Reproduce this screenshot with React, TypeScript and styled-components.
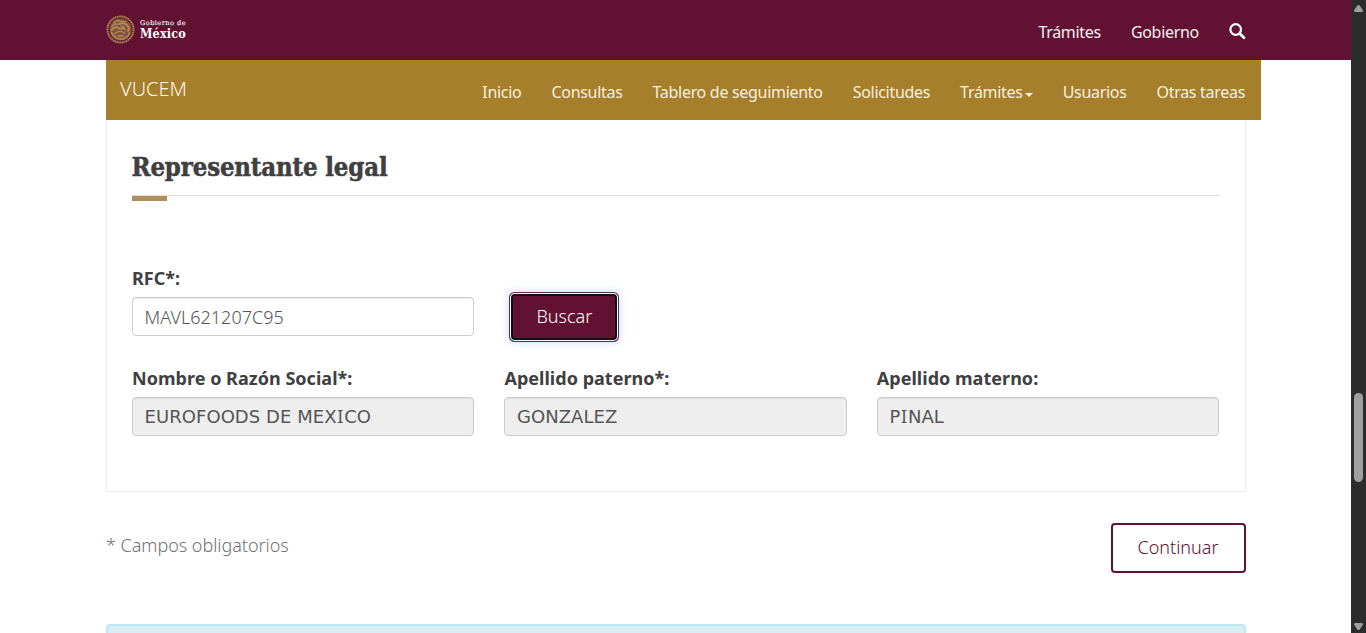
import React from 'react';
import styled, { createGlobalStyle } from 'styled-components';

const GlobalStyle = createGlobalStyle`
  *, *::before, *::after { box-sizing: border-box; }
  body { margin: 0; background: #fff; overflow: hidden; }
  #root { height: 633px; }
`;

const Screen = styled.div`
  display: flex;
  width: 1366px;
  height: 633px;
  overflow: hidden;
  font-family: 'Noto Sans', sans-serif;
  font-size: 18px;
  font-weight: 300;
  color: #404041;
`;

const Viewport = styled.div`
  flex: 1;
  min-width: 0;
  overflow: hidden;
`;

const Header = styled.header`
  display: flex;
  justify-content: space-between;
  height: 60px;
  padding: 0 105px 0 106px;
  background: #611232;
  color: #fff;
`;

const Brand = styled.div`
  display: flex;
  align-items: flex-start;
  gap: 5px;
  padding-top: 15px;
`;

const BrandText = styled.div`
  display: flex;
  flex-direction: column;
  padding-top: 4px;
  font-family: 'DejaVu Serif', serif;
  font-weight: 700;
`;

const BrandSmall = styled.span`
  font-size: 6.6px;
  line-height: 9px;
  font-weight: 400;
  letter-spacing: 0.45px;
  -webkit-text-stroke: 0.1px currentColor;
`;

const BrandLarge = styled.span`
  font-family: 'DejaVu Serif Condensed', 'DejaVu Serif', serif;
  font-size: 12.5px;
  line-height: 11px;
  letter-spacing: 0.15px;
`;

const Links = styled.nav<{ $tone: string }>`
  display: flex;
  align-items: flex-start;
  gap: 30px;
  padding-top: 20px;
  font-size: 16px;
  line-height: 24px;
  font-weight: 400;
  letter-spacing: -0.3px;
  color: ${p => p.$tone};
  white-space: nowrap;
`;

const NavLink = styled.span`
  display: flex;
  align-items: center;
`;

const Caret = styled.i`
  margin: 5px 0 0 2px;
  border: 4px solid transparent;
  border-top-color: currentColor;
  border-bottom: 0;
`;

const SubNav = styled.div`
  display: flex;
  justify-content: space-between;
  width: 1155px;
  height: 60px;
  margin-left: 106px;
  padding: 0 16px 0 14px;
  background: #a57f2c;
`;

const SubBrand = styled.span`
  padding-top: 14px;
  font-size: 20px;
  line-height: 30px;
  color: #fbf5ec;
`;

const Main = styled.main`
  width: 1140px;
  margin-left: 106px;
`;

const Panel = styled.section`
  height: 372px;
  padding: 27px 25px 0;
  border: 1px solid #eee;
  border-top: 0;
`;

const Title = styled.h3`
  height: 49px;
  margin: 0;
  border-bottom: 1px solid #ddd;
  font-family: 'DejaVu Serif Condensed', 'DejaVu Serif', serif;
  font-size: 25.5px;
  line-height: 41px;
  font-weight: 700;
  letter-spacing: -0.15px;
  text-indent: -0.5px;
  -webkit-text-stroke: 0.5px currentColor;
  white-space: nowrap;
`;

const Accent = styled.div`
  width: 35px;
  height: 5px;
  background: #b38e5d;
`;

const Row = styled.div<{ $top: number }>`
  display: grid;
  grid-template-columns: repeat(3, 342.4px);
  column-gap: 30px;
  margin-top: ${p => p.$top}px;
`;

const Field = styled.div`
  display: flex;
  flex-direction: column;
`;

const Label = styled.label`
  height: 31px;
  line-height: 25px;
  font-weight: 700;
  letter-spacing: 0.03px;
  white-space: nowrap;
`;

const Control = styled.div<{ $disabled?: boolean }>`
  height: 39px;
  padding: 0 12px;
  border: 1px solid #ccc;
  border-radius: 4px;
  box-shadow: inset 0 1px 1px rgba(0, 0, 0, 0.075);
  background: ${p => (p.$disabled ? '#eee' : '#fff')};
  color: #555;
  line-height: ${p => (p.$disabled ? 37 : 39)}px;
  font-family: ${p => (p.$disabled ? "'DejaVu Sans', sans-serif" : 'inherit')};
  font-weight: ${p => (p.$disabled ? 400 : 300)};
  text-indent: -0.4px;
  letter-spacing: ${p => (p.$disabled ? 0.05 : 0)}px;
  white-space: nowrap;
`;

const SlabI = styled.span`
  font-family: 'Noto Sans', sans-serif;
  letter-spacing: 0.8px;
  margin-left: 0.7px;
`;

const Button = styled.button<{ $primary?: boolean }>`
  height: ${p => (p.$primary ? 42 : 50)}px;
  width: ${p => (p.$primary ? 102 : 135)}px;
  padding: ${p => (p.$primary ? '0 0 2px' : '0 1px 2px 0')};
  border: ${p => (p.$primary ? '0' : '2px solid #611232')};
  border-radius: ${p => (p.$primary ? 2 : 4)}px;
  background: ${p => (p.$primary ? '#611232' : '#fff')};
  color: ${p => (p.$primary ? '#fff' : '#611232')};
  margin: ${p => (p.$primary ? '30px 0 0 9px' : '0')};
  box-shadow: ${p =>
    p.$primary
      ? '0 0 0 2px #101010, 0 0 0 3px #fff, 0 0 0 4px #612a5a, 0 0 9px 4px rgba(102, 175, 233, 0.45)'
      : 'none'};
  font: inherit;
`;

const Footer = styled.div`
  display: flex;
  justify-content: space-between;
  margin-top: 31px;
`;

const Note = styled.span`
  padding-top: 10px;
  line-height: 25px;
  letter-spacing: -0.03px;
  color: #727272;
`;

const Alert = styled.div`
  height: 60px;
  margin-top: 51px;
  border: 2px solid #bce8f1;
  border-radius: 4px;
  background: #d9edf7;
`;

const Scrollbar = styled.div`
  display: flex;
  flex-direction: column;
  align-items: center;
  width: 15px;
  background: #2c2c2c;
`;

const Thumb = styled.div`
  width: 9px;
  height: 89px;
  margin: 381px 0 139px;
  border-radius: 5px;
  background: #9f9f9f;
`;

const ArrowIcon = ({ down }: { down?: boolean }) => (
  <svg width="15" height="12" viewBox="0 0 15 12">
    <path
      d={down ? 'M3 3.6Q3 2 4.2 2H10.8Q12 2 12 3.6L8.7 8.4Q7.5 9.6 6.3 8.4Z' : 'M3 10.4Q3 12 4.2 12H10.8Q12 12 12 10.4L8.7 5.6Q7.5 4.4 6.3 5.6Z'}
      fill="#9f9f9f"
    />
  </svg>
);

const Seal = () => (
  <svg width="29" height="29" viewBox="0 0 29 29" fill="none">
    <circle cx="14.5" cy="14.5" r="11" fill="#84513f" />
    <circle cx="14.5" cy="14.5" r="13" stroke="#a57f4c" strokeWidth="2" strokeDasharray="1.8 .4" />
    <circle cx="14.5" cy="14.5" r="11.6" stroke="#6d2a38" strokeWidth=".7" />
    <g stroke="#b08a52" strokeLinecap="round">
      <path d="M8 8Q11 4.5 14 6T19.5 6.5M6 11.5Q9 8 11.5 9.5" strokeWidth="1.5" />
      <path d="M13 9Q18 7 21 10T22 16M5.5 15Q9 11 12.5 13T18 12" strokeWidth="1.9" />
      <path d="M5.5 17.5Q8 23.5 14.5 24T23.5 18" strokeWidth="1.7" />
      <path d="M9 18.5Q13 14.5 18.5 18M12 21H17.5M15 11L19.5 15" strokeWidth="1.4" />
    </g>
  </svg>
);

const SearchIcon = () => (
  <svg width="17" height="17" viewBox="0 0 17 17" fill="none" stroke="#fff">
    <circle cx="6.7" cy="6.5" r="5.3" strokeWidth="2.2" />
    <path d="M10.7 10.5L15 14.8" strokeWidth="2.8" strokeLinecap="round" />
  </svg>
);

const SearchBox = styled.span`
  display: flex;
  padding-top: 3px;
`;

const Value = ({ text }: { text: string }) => (
  <>
    {text.split(/(I)/).map((part, i) => (part === 'I' ? <SlabI key={i}>I</SlabI> : part))}
  </>
);

const menu = ['Inicio', 'Consultas', 'Tablero de seguimiento', 'Solicitudes', 'Trámites', 'Usuarios', 'Otras tareas'];

const people = [
  ['Nombre o Razón Social*:', 'EUROFOODS DE MEXICO'],
  ['Apellido paterno*:', 'GONZALEZ'],
  ['Apellido materno:', 'PINAL'],
];

export default function App() {
  return (
    <Screen>
      <GlobalStyle />
      <Viewport>
        <Header>
          <Brand>
            <Seal />
            <BrandText>
              <BrandSmall>Gobierno de</BrandSmall>
              <BrandLarge>México</BrandLarge>
            </BrandText>
          </Brand>
          <Links $tone="#f6eef1">
            <NavLink>Trámites</NavLink>
            <NavLink>Gobierno</NavLink>
            <SearchBox><SearchIcon /></SearchBox>
          </Links>
        </Header>
        <SubNav>
          <SubBrand>VUCEM</SubBrand>
          <Links $tone="#f8efdc">
            {menu.map(item => (
              <NavLink key={item}>
                {item}
                {item === 'Trámites' && <Caret />}
              </NavLink>
            ))}
          </Links>
        </SubNav>
        <Main>
          <Panel>
            <Title>Representante legal</Title>
            <Accent />
            <Row $top={65}>
              <Field>
                <Label>RFC*:</Label>
                <Control>MAVL621207C95</Control>
              </Field>
              <Field>
                <Button $primary>Buscar</Button>
              </Field>
            </Row>
            <Row $top={28}>
              {people.map(([label, value]) => (
                <Field key={label}>
                  <Label>{label}</Label>
                  <Control $disabled><Value text={value} /></Control>
                </Field>
              ))}
            </Row>
          </Panel>
          <Footer>
            <Note>* Campos obligatorios</Note>
            <Button>Continuar</Button>
          </Footer>
          <Alert />
        </Main>
      </Viewport>
      <Scrollbar>
        <ArrowIcon />
        <Thumb />
        <ArrowIcon down />
      </Scrollbar>
    </Screen>
  );
}
